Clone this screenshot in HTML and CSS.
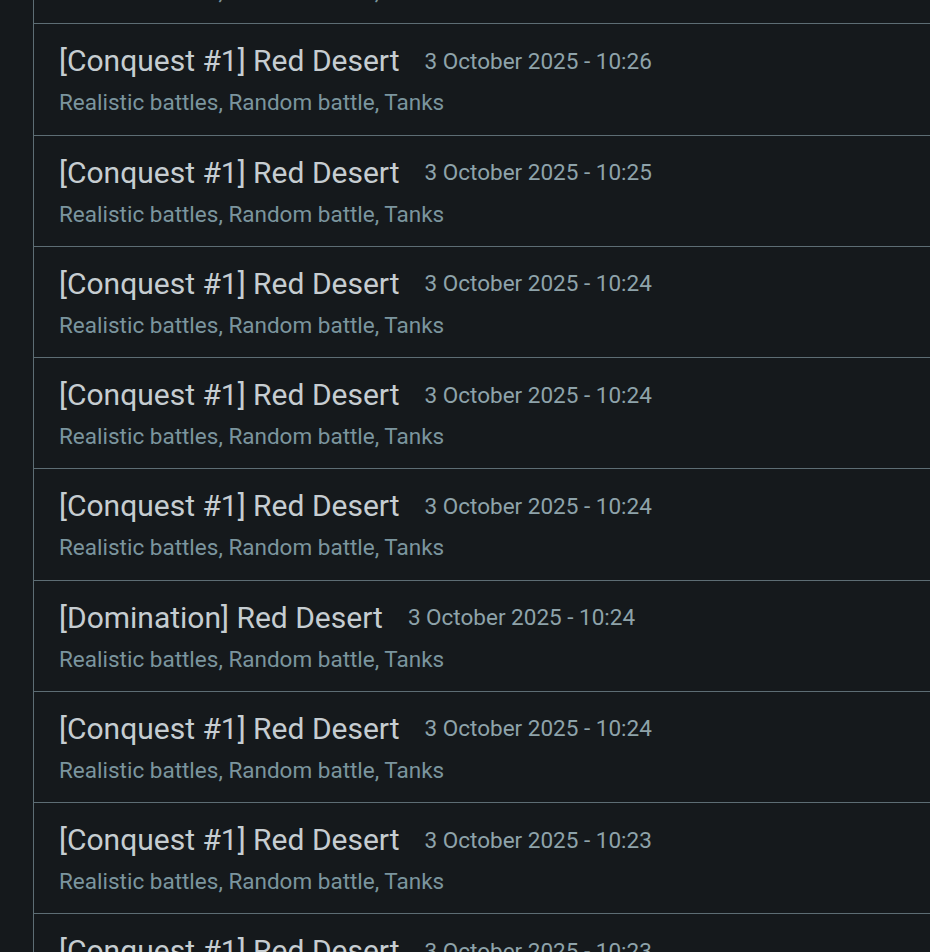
FILE: index.html
```html
<!DOCTYPE html>
<html>
<head>
<meta charset="utf-8">
<link rel="stylesheet" href="styles.css">
</head>
<body>
<div class="list">
  <div class="row"><div class="head"><span class="title">[Conquest #1] Red Desert</span><span class="date">3 October 2025 - 10:26</span></div><div class="sub">Realistic battles, Random battle, Tanks</div></div>
  <div class="row"><div class="head"><span class="title">[Conquest #1] Red Desert</span><span class="date">3 October 2025 - 10:26</span></div><div class="sub">Realistic battles, Random battle, Tanks</div></div>
  <div class="row"><div class="head"><span class="title">[Conquest #1] Red Desert</span><span class="date">3 October 2025 - 10:25</span></div><div class="sub">Realistic battles, Random battle, Tanks</div></div>
  <div class="row"><div class="head"><span class="title">[Conquest #1] Red Desert</span><span class="date">3 October 2025 - 10:24</span></div><div class="sub">Realistic battles, Random battle, Tanks</div></div>
  <div class="row"><div class="head"><span class="title">[Conquest #1] Red Desert</span><span class="date">3 October 2025 - 10:24</span></div><div class="sub">Realistic battles, Random battle, Tanks</div></div>
  <div class="row"><div class="head"><span class="title">[Conquest #1] Red Desert</span><span class="date">3 October 2025 - 10:24</span></div><div class="sub">Realistic battles, Random battle, Tanks</div></div>
  <div class="row"><div class="head"><span class="title">[Domination] Red Desert</span><span class="date">3 October 2025 - 10:24</span></div><div class="sub">Realistic battles, Random battle, Tanks</div></div>
  <div class="row"><div class="head"><span class="title">[Conquest #1] Red Desert</span><span class="date">3 October 2025 - 10:24</span></div><div class="sub">Realistic battles, Random battle, Tanks</div></div>
  <div class="row"><div class="head"><span class="title">[Conquest #1] Red Desert</span><span class="date">3 October 2025 - 10:23</span></div><div class="sub">Realistic battles, Random battle, Tanks</div></div>
  <div class="row"><div class="head"><span class="title">[Conquest #1] Red Desert</span><span class="date">3 October 2025 - 10:23</span></div><div class="sub">Realistic battles, Random battle, Tanks</div></div>
</div>
</body>
</html>
```
FILE: styles.css
```css
html, body {
  margin: 0;
  padding: 0;
  background: #15191c;
  height: 100%;
  overflow: hidden;
}
body {
  font-family: Roboto, "Noto Sans", sans-serif;
}
.list {
  margin-left: 33px;
  border-left: 1px solid #5d6d74;
  margin-top: -87px;
  min-height: 1200px;
}
.row {
  height: 111.25px;
  box-sizing: border-box;
  border-bottom: 1px solid #5d6d74;
  padding: 17.5px 0 0 25px;
}
.head {
  display: flex;
  align-items: center;
  gap: 25px;
  height: 38px;
}
.title {
  font-size: 30px;
  color: #c6cdd1;
}
.date {
  font-size: 22.5px;
  color: #8ea3aa;
}
.sub {
  margin-top: 9.5px;
  font-size: 22.5px;
  color: #7b959e;
}
```
